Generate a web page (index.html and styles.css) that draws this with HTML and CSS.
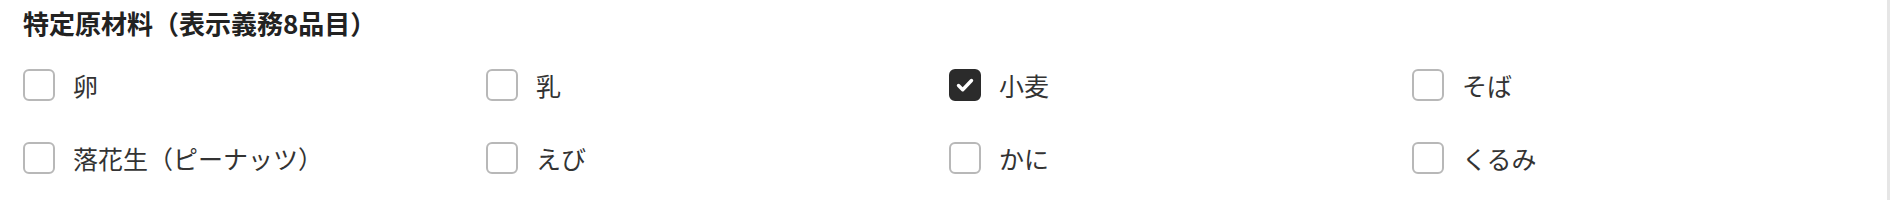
FILE: index.html
```html
<!DOCTYPE html>
<html lang="ja">
<head>
    <meta charset="UTF-8">
    <meta name="viewport" content="width=device-width, initial-scale=1.0">
    <title>特定原材料</title>
    <link rel="stylesheet" href="styles.css">
</head>
<body>
    <div class="panel">
        <h2 class="section-title">特定原材料（表示義務8品目）</h2>

        <!-- アレルゲン一覧 -->
        <div class="allergen-grid">
            <label class="check-item">
                <input type="checkbox" name="allergen" value="egg">
                <span class="box"></span>
                <span class="check-label">卵</span>
            </label>
            <label class="check-item">
                <input type="checkbox" name="allergen" value="milk">
                <span class="box"></span>
                <span class="check-label">乳</span>
            </label>
            <label class="check-item">
                <input type="checkbox" name="allergen" value="wheat" checked>
                <span class="box">
                    <svg viewBox="0 0 24 24" width="24" height="24"><path d="M5.5 12.5l4.2 4.2L18.5 7.5" fill="none" stroke="#fff" stroke-width="3.4" stroke-linecap="round" stroke-linejoin="round"/></svg>
                </span>
                <span class="check-label">小麦</span>
            </label>
            <label class="check-item">
                <input type="checkbox" name="allergen" value="buckwheat">
                <span class="box"></span>
                <span class="check-label">そば</span>
            </label>
            <label class="check-item">
                <input type="checkbox" name="allergen" value="peanut">
                <span class="box"></span>
                <span class="check-label">落花生（ピーナッツ）</span>
            </label>
            <label class="check-item">
                <input type="checkbox" name="allergen" value="shrimp">
                <span class="box"></span>
                <span class="check-label">えび</span>
            </label>
            <label class="check-item">
                <input type="checkbox" name="allergen" value="crab">
                <span class="box"></span>
                <span class="check-label">かに</span>
            </label>
            <label class="check-item">
                <input type="checkbox" name="allergen" value="walnut">
                <span class="box"></span>
                <span class="check-label">くるみ</span>
            </label>
        </div>
    </div>
</body>
</html>
```

FILE: styles.css
```css
body {
    font-family: "Noto Sans CJK JP", "Noto Sans", sans-serif;
    margin: 0;
    padding: 0;
    background: #fff;
    color: #333;
}
.panel {
    height: 200px;
    box-sizing: border-box;
    padding: 8px 0 0 23px;
    border-right: 3px solid #e6e6e6;
}
.section-title {
    font-size: 26px;
    line-height: 30px;
    font-weight: bold;
    color: #222;
    margin: 0 0 27px 0;
}
.allergen-grid {
    display: grid;
    grid-template-columns: repeat(4, 463px);
    row-gap: 33px;
}
.check-item {
    display: flex;
    align-items: center;
    height: 40px;
    cursor: pointer;
}
.check-item input {
    display: none;
}
.box {
    width: 32px;
    height: 32px;
    box-sizing: border-box;
    border: 2px solid #b8b8b8;
    border-radius: 6px;
    display: flex;
    align-items: center;
    justify-content: center;
    flex-shrink: 0;
}
.check-item input:checked + .box {
    background-color: #2b2b2b;
    border-color: #2b2b2b;
}
.check-label {
    margin-left: 18px;
    font-size: 25px;
    color: #333;
}
```
